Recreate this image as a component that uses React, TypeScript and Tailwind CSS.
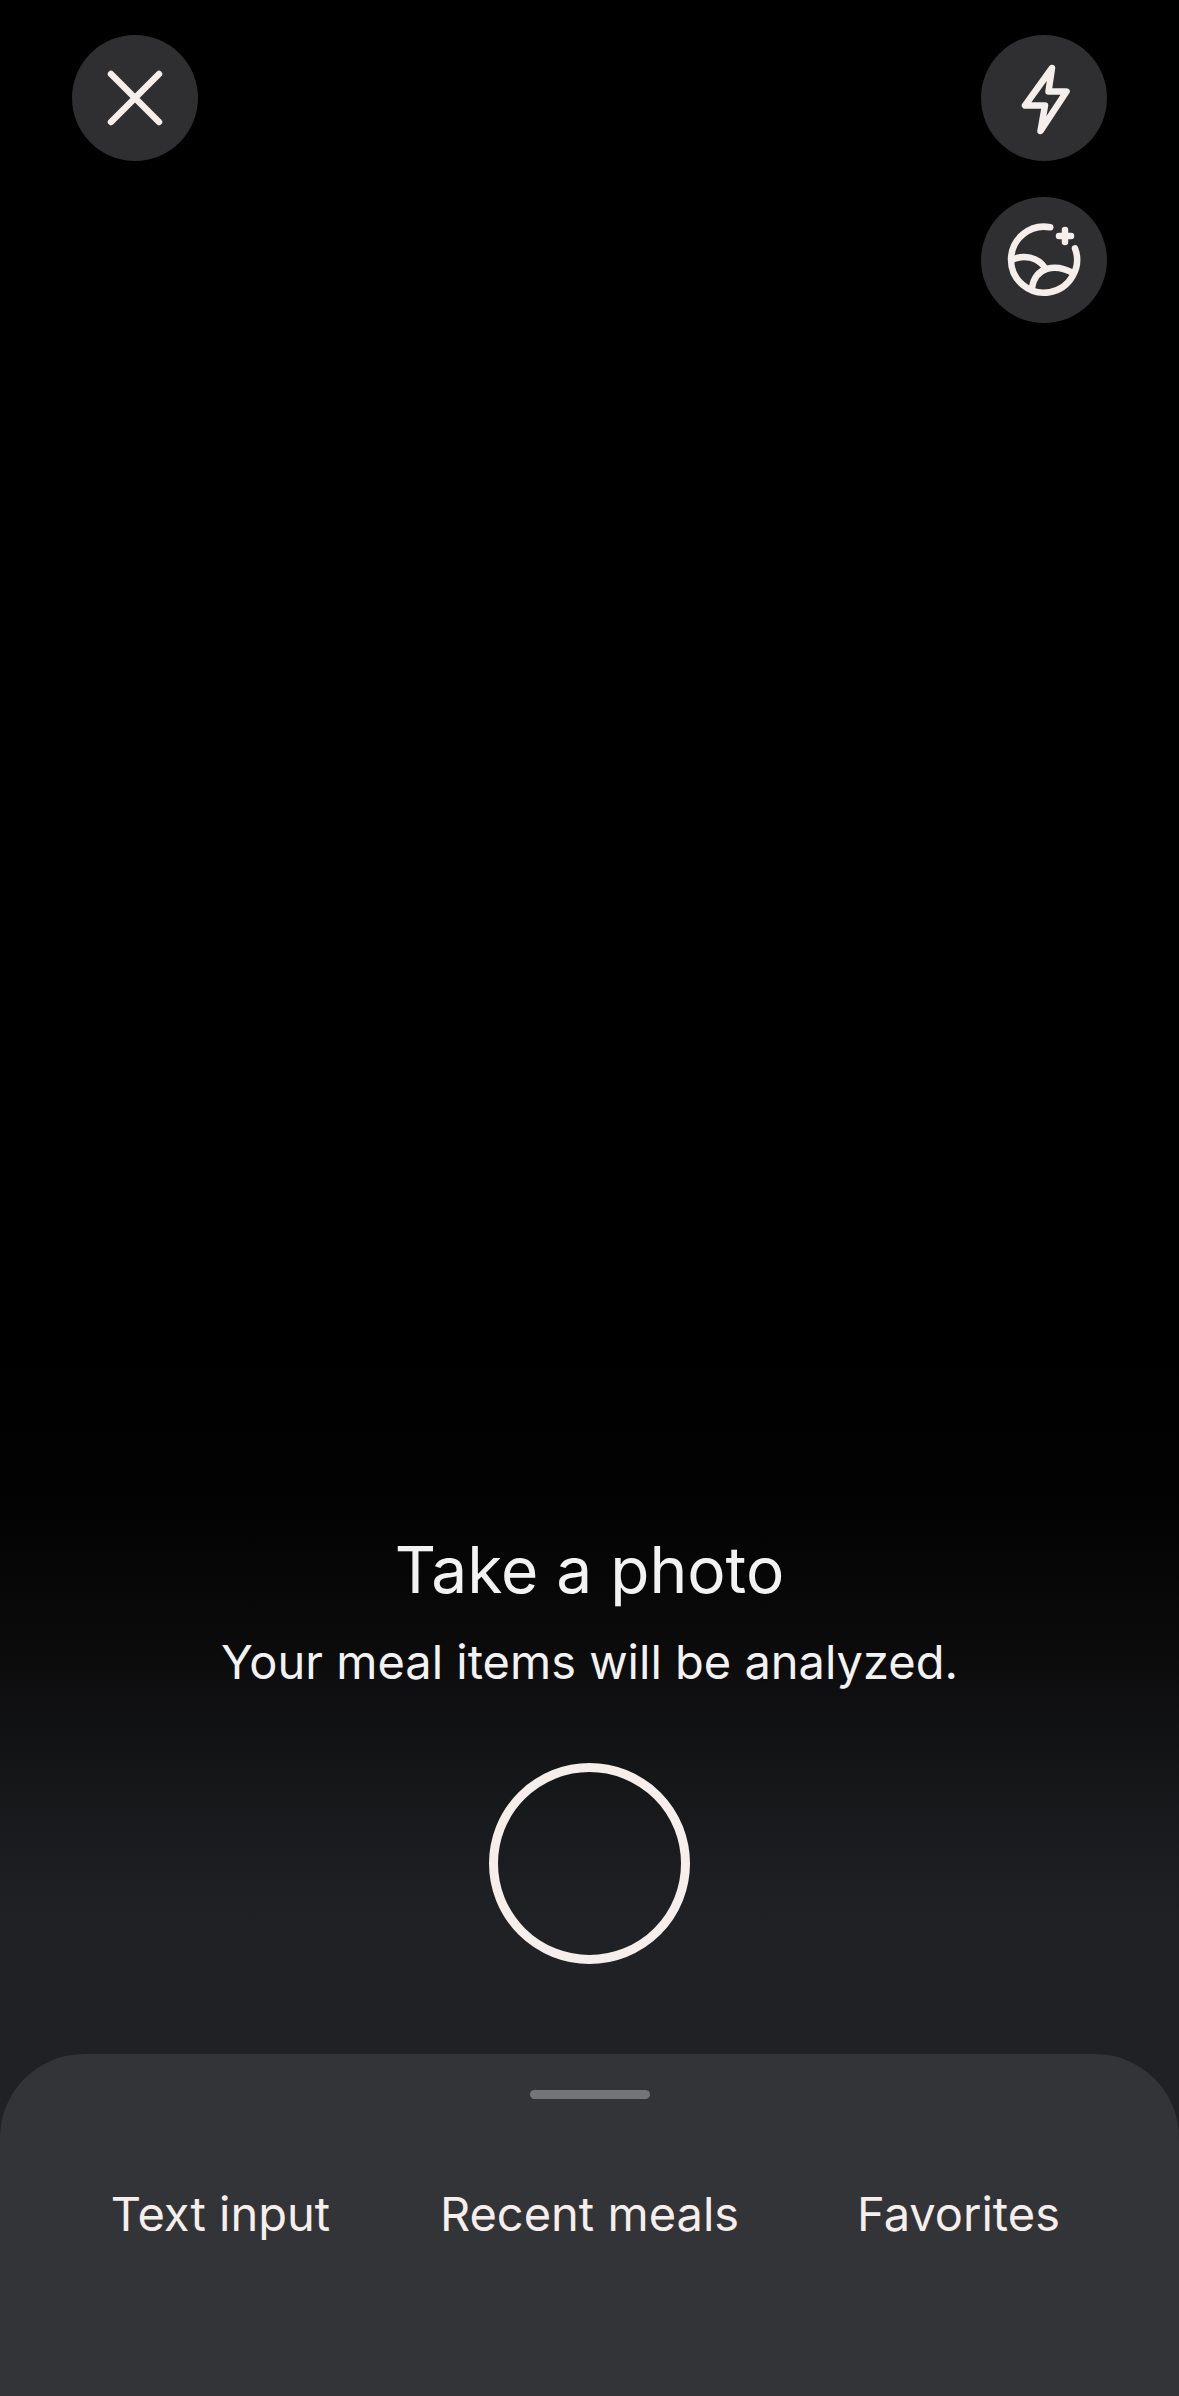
import type { ReactNode } from 'react'

const options = ['Text input', 'Recent meals', 'Favorites']

function RoundButton({ label, children }: { label: string; children: ReactNode }) {
  return (
    <button
      type="button"
      aria-label={label}
      className="size-[126px] rounded-full bg-[#2f2f31] text-[#f5eeea]"
    >
      <svg
        className="size-full"
        viewBox="0 0 126 126"
        fill="none"
        stroke="currentColor"
        strokeWidth={6.5}
        strokeLinecap="round"
        strokeLinejoin="round"
      >
        {children}
      </svg>
    </button>
  )
}

export default function App() {
  return (
    <main className="flex min-h-screen flex-col bg-black font-['Inter',sans-serif] text-[#f5eeea]">
      <header className="flex items-start justify-between px-[72px] pt-[35px]">
        <RoundButton label="Close">
          <path d="M39 39L87 87M87 39L39 87" />
        </RoundButton>
        <div className="flex flex-col gap-9">
          <RoundButton label="Flash">
            <path d="M71 33L44 70.5H64L59.5 96L85.5 56.5H67.5Z" />
          </RoundButton>
          <RoundButton label="Choose from gallery">
            <path d="M69.3 30.3A33 33 0 1 0 94 51.3" />
            <path d="M31 63C42 57 57 60 64 71" />
            <path d="M51 91C54 70 74 66 92 76" />
            <path d="M84 33V45M78 39H90" />
          </RoundButton>
        </div>
      </header>

      <section className="mt-auto flex flex-col items-center bg-[linear-gradient(to_bottom,#000_0px,#030303_155px,#0b0b0c_290px,#161719_430px,#202125_560px)] pt-[170px]">
        <h1 className="text-[64px] leading-[80px] text-[#f2f2f2]">Take a photo</h1>
        <p className="mt-5 text-[47px] leading-[64px] text-[#f2f2f2]">
          Your meal items will be analyzed.
        </p>
        <button
          type="button"
          aria-label="Take a photo"
          className="mt-[69px] size-[201px] rounded-full border-9 border-[#f5eeea]"
        />

        <div className="mt-[90px] w-full rounded-t-[84px] bg-[#333437] px-9 pt-9 pb-[150px]">
          <div className="mx-auto h-[9px] w-[120px] rounded-full bg-[#747579]" />
          <nav className="mt-[83px] grid grid-cols-3">
            {options.map((option) => (
              <button key={option} type="button" className="text-[47px] leading-[64px]">
                {option}
              </button>
            ))}
          </nav>
        </div>
      </section>
    </main>
  )
}
